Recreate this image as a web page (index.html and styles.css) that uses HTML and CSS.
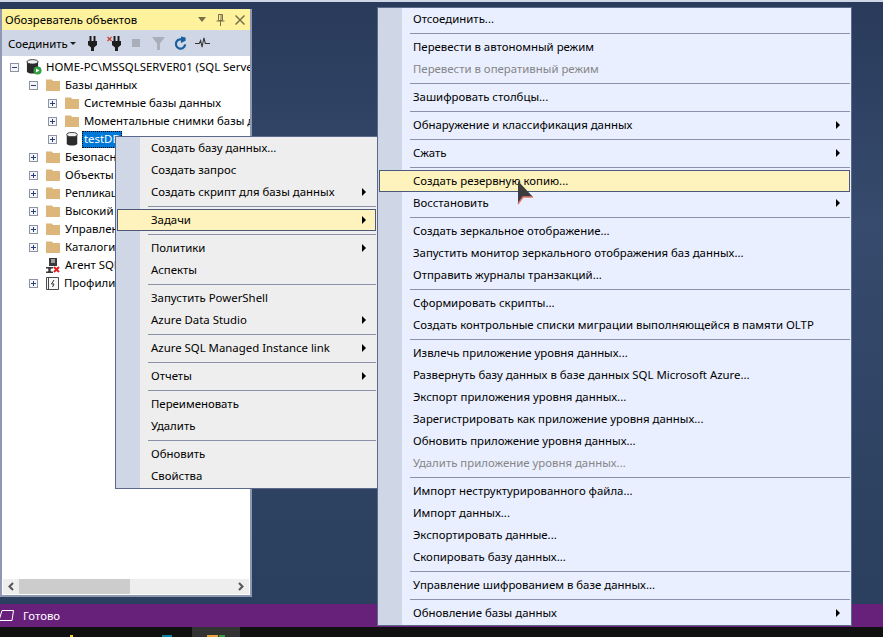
FILE: index.html
```html
<!DOCTYPE html>
<html lang="ru">
<head>
  <meta charset="UTF-8">
  <title>Обозреватель объектов</title>
  <link rel="stylesheet" href="styles.css">
</head>
<body>
  <svg class="defs" width="0" height="0">
    <symbol id="folder" viewBox="0 0 14 14">
      <path d="M0 1.500h6l1 1.500h7v10H0z" fill="#dcb67a"/>
    </symbol>
    <symbol id="db" viewBox="0 0 14 16">
      <path d="M1 3v10c0 1.600 2.700 2.500 6 2.500s6-.9 6-2.500V3z" fill="#2b2b2b"/>
      <ellipse cx="7" cy="3" rx="6" ry="2.400" fill="#f1f1f1" stroke="#2b2b2b"/>
    </symbol>
    <symbol id="plug" viewBox="0 0 9 15">
      <path d="M1.500 0h2v5h-2zM5.500 0h2v5h-2zM0 5h9v4L6 11.500V15H3v-3.500L0 9z" fill="#1e1e1e"/>
    </symbol>
  </svg>

  <div class="screen">
    <div class="top-strip"></div>
    <div class="workspace">
      <section class="panel">
        <header class="panel-title">
          <span class="panel-name">Обозреватель объектов</span>
          <span class="title-icons">
            <svg width="8" height="5" viewBox="0 0 8 5"><path d="M0 0h8L4 5z" fill="#77704a"/></svg>
            <svg width="9" height="12" viewBox="0 0 9 12"><path d="M2.500 .5h4v6h-4zM.5 7h8M4.500 7v5M5 1v5" fill="none" stroke="#77704a"/></svg>
            <svg width="10" height="10" viewBox="0 0 10 10"><path d="M.5 .5l9 9M9.500 .5l-9 9" stroke="#77704a" stroke-width="1.500"/></svg>
          </span>
        </header>
        <div class="toolbar">
          <span class="connect">Соединить</span>
          <svg class="caret" width="6" height="3" viewBox="0 0 6 3"><path d="M0 0h6L3 3z" fill="#1e1e1e"/></svg>
          <svg class="tool-plug" width="9" height="15"><use href="#plug"/></svg>
          <svg class="tool-plug-x" width="14" height="15" viewBox="0 0 14 15">
            <use href="#plug" x="5" width="9" height="15"/>
            <path d="M.5 1l4 4M4.500 1l-4 4" stroke="#c8412f" stroke-width="1.200"/>
          </svg>
          <span class="tool-stop"></span>
          <svg class="tool-filter" width="13" height="13" viewBox="0 0 14 14"><path d="M0 0h14L8.500 7v7h-3V7z" fill="#a9aeb8"/></svg>
          <svg class="tool-refresh" width="13" height="15" viewBox="0 0 14 15">
            <path d="M10.500 4.500a5 5 0 1 0 1.500 4" fill="none" stroke="#1c5f9e" stroke-width="2.400"/>
            <path d="M7.500 0v7l5-2.500V1z" fill="#1c5f9e"/>
          </svg>
          <svg class="tool-activity" width="15" height="12" viewBox="0 0 16 12"><path d="M0 6.500h4.500l1.500-3 1.500 7 2-10 1.500 6h5" fill="none" stroke="#333" stroke-width="1.100"/></svg>
        </div>

        <div class="tree">
          <div class="tree-row level-0">
            <span class="toggle minus"></span>
            <svg class="node-icon server-icon" width="16" height="16" viewBox="0 0 16 16">
              <use href="#db" width="13" height="15"/>
              <circle cx="11.500" cy="11.500" r="4" fill="#2e9e3e"/>
              <path d="M10 9.500l3.500 2-3.500 2z" fill="#fff"/>
            </svg>
            <span class="label">HOME-PC\MSSQLSERVER01 (SQL Server)</span>
          </div>
          <div class="tree-row level-1">
            <span class="toggle minus"></span>
            <svg class="node-icon" width="14" height="14"><use href="#folder"/></svg>
            <span class="label">Базы данных</span>
          </div>
          <div class="tree-row level-2">
            <span class="toggle"></span>
            <svg class="node-icon" width="14" height="14"><use href="#folder"/></svg>
            <span class="label">Системные базы данных</span>
          </div>
          <div class="tree-row level-2">
            <span class="toggle"></span>
            <svg class="node-icon" width="14" height="14"><use href="#folder"/></svg>
            <span class="label">Моментальные снимки базы данных</span>
          </div>
          <div class="tree-row level-2">
            <span class="toggle"></span>
            <svg class="node-icon" width="14" height="14"><use href="#db"/></svg>
            <span class="label selected">testDB</span>
          </div>
          <div class="tree-row level-1">
            <span class="toggle"></span>
            <svg class="node-icon" width="14" height="14"><use href="#folder"/></svg>
            <span class="label">Безопасность</span>
          </div>
          <div class="tree-row level-1">
            <span class="toggle"></span>
            <svg class="node-icon" width="14" height="14"><use href="#folder"/></svg>
            <span class="label">Объекты сервера</span>
          </div>
          <div class="tree-row level-1">
            <span class="toggle"></span>
            <svg class="node-icon" width="14" height="14"><use href="#folder"/></svg>
            <span class="label">Репликация</span>
          </div>
          <div class="tree-row level-1">
            <span class="toggle"></span>
            <svg class="node-icon" width="14" height="14"><use href="#folder"/></svg>
            <span class="label">Высокий уровень доступности</span>
          </div>
          <div class="tree-row level-1">
            <span class="toggle"></span>
            <svg class="node-icon" width="14" height="14"><use href="#folder"/></svg>
            <span class="label">Управление</span>
          </div>
          <div class="tree-row level-1">
            <span class="toggle"></span>
            <svg class="node-icon" width="14" height="14"><use href="#folder"/></svg>
            <span class="label">Каталоги Integration Services</span>
          </div>
          <div class="tree-row level-1">
            <span class="toggle blank"></span>
            <svg class="node-icon" width="14" height="15" viewBox="0 0 14 15">
              <path d="M3 0h8v8H3z" fill="#3a3a3a"/>
              <path d="M5 2h4M5 4h4" stroke="#fff"/>
              <path d="M0 9h7v1.500H5L4.500 12 5 13.500h2V15H0v-1.500h2L2.500 12 2 10.500H0z" fill="#3a3a3a"/>
              <path d="M8 9l5 5M13 9l-5 5" stroke="#e02020" stroke-width="2"/>
            </svg>
            <span class="label">Агент SQL Server</span>
          </div>
          <div class="tree-row level-1">
            <span class="toggle"></span>
            <svg class="node-icon" width="13" height="13" viewBox="0 0 13 13">
              <path d="M.5 .5h12v12H.5z" fill="#f7f7f7" stroke="#4a4a4a"/>
              <path d="M2.500 1v11" stroke="#4a4a4a"/>
              <path d="M8 3L5.500 7H8L6.500 10" fill="none" stroke="#333"/>
            </svg>
            <span class="label">Профилировщик XEvent</span>
          </div>
        </div>

        <div class="hscroll">
          <svg width="6" height="9" viewBox="0 0 6 9"><path d="M5 1L1.500 4.500 5 8" fill="none" stroke="#555" stroke-width="2"/></svg>
          <div class="hscroll-track"><div class="hscroll-thumb"></div></div>
          <svg width="6" height="9" viewBox="0 0 6 9"><path d="M1 1l3.500 3.500L1 8" fill="none" stroke="#555" stroke-width="2"/></svg>
        </div>
      </section>
    </div>

    <footer class="status">
      <svg width="14" height="11" viewBox="0 0 14 11"><path d="M2 .5h11.500L12 10.500H-1z" fill="none" stroke="#fff"/></svg>
      <span>Готово</span>
    </footer>
    <div class="taskbar">
      <span class="task-bit yellow"></span>
      <span class="task-bit teal"></span>
      <div class="task-active">
        <span class="task-bit orange"></span>
        <span class="task-bit green"></span>
      </div>
    </div>
  </div>

  <nav class="menu context-menu">
    <div class="item">Создать базу данных...</div>
    <div class="item">Создать запрос</div>
    <div class="item more">Создать скрипт для базы данных</div>
    <div class="sep"></div>
    <div class="item more active">Задачи</div>
    <div class="sep"></div>
    <div class="item more">Политики</div>
    <div class="item">Аспекты</div>
    <div class="sep"></div>
    <div class="item">Запустить PowerShell</div>
    <div class="item more">Azure Data Studio</div>
    <div class="sep"></div>
    <div class="item more">Azure SQL Managed Instance link</div>
    <div class="sep"></div>
    <div class="item more">Отчеты</div>
    <div class="sep"></div>
    <div class="item">Переименовать</div>
    <div class="item">Удалить</div>
    <div class="sep"></div>
    <div class="item">Обновить</div>
    <div class="item">Свойства</div>
  </nav>

  <nav class="menu tasks-menu">
    <div class="item">Отсоединить...</div>
    <div class="sep"></div>
    <div class="item">Перевести в автономный режим</div>
    <div class="item disabled">Перевести в оперативный режим</div>
    <div class="sep"></div>
    <div class="item">Зашифровать столбцы...</div>
    <div class="sep"></div>
    <div class="item more">Обнаружение и классификация данных</div>
    <div class="sep"></div>
    <div class="item more">Сжать</div>
    <div class="sep"></div>
    <div class="item active">Создать резервную копию...</div>
    <div class="item more">Восстановить</div>
    <div class="sep"></div>
    <div class="item">Создать зеркальное отображение...</div>
    <div class="item">Запустить монитор зеркального отображения баз данных...</div>
    <div class="item">Отправить журналы транзакций...</div>
    <div class="sep"></div>
    <div class="item">Сформировать скрипты...</div>
    <div class="item">Создать контрольные списки миграции выполняющейся в памяти OLTP</div>
    <div class="sep"></div>
    <div class="item">Извлечь приложение уровня данных...</div>
    <div class="item">Развернуть базу данных в базе данных SQL Microsoft Azure...</div>
    <div class="item">Экспорт приложения уровня данных...</div>
    <div class="item">Зарегистрировать как приложение уровня данных...</div>
    <div class="item">Обновить приложение уровня данных...</div>
    <div class="item disabled">Удалить приложение уровня данных...</div>
    <div class="sep"></div>
    <div class="item">Импорт неструктурированного файла...</div>
    <div class="item">Импорт данных...</div>
    <div class="item">Экспортировать данные...</div>
    <div class="item">Скопировать базу данных...</div>
    <div class="sep"></div>
    <div class="item">Управление шифрованием в базе данных...</div>
    <div class="sep"></div>
    <div class="item more">Обновление базы данных</div>
  </nav>

  <svg class="pointer" width="17" height="24" viewBox="0 0 17 24">
    <path d="M1 0L16 16 6 16 1 23z" fill="#3d3d3f"/>
    <path d="M16 16H6L1 23" fill="none" stroke="#e0786e" stroke-width="1.500"/>
  </svg>
</body>
</html>
```

FILE: styles.css
```css
body {
  margin: 0;
  font-family: "Noto Sans", sans-serif;
  font-size: 11.4px;
  color: #000;
  overflow: hidden;
}
.defs {
  position: absolute;
}
.screen {
  display: flex;
  flex-direction: column;
  height: 637px;
  background: linear-gradient(#293a5a, #364b6d 35%, #2b3f5e 90%);
}
.top-strip {
  height: 2px;
  background: #cfd6e5;
}
.workspace {
  flex: 1;
  padding-top: 7px;
}

/* object explorer */
.panel {
  display: flex;
  flex-direction: column;
  width: 248px;
  height: 586px;
  border: 2px solid #8f98b3;
  border-top: 0;
  background: #fff;
}
.panel-title {
  display: flex;
  align-items: center;
  justify-content: space-between;
  height: 21px;
  padding: 0 5px 0 3px;
  background: #fff29d;
}
.title-icons {
  display: flex;
  align-items: center;
  gap: 10px;
}
.toolbar {
  display: flex;
  align-items: center;
  height: 26px;
  padding-left: 6px;
  background: #cfd6e5;
}
.connect {
  width: 58px;
}
.caret {
  margin-left: 4px;
}
.tool-plug {
  margin-left: 12px;
}
.tool-plug-x {
  margin-left: 10px;
}
.tool-stop {
  width: 8px;
  height: 8px;
  margin-left: 11px;
  background: #a9aeb8;
}
.tool-filter {
  margin-left: 12px;
}
.tool-refresh {
  margin-left: 9px;
}
.tool-activity {
  margin-left: 8px;
}
.tree {
  flex: 1;
  padding-top: 2px;
  overflow: hidden;
}
.tree-row {
  display: flex;
  align-items: center;
  height: 18px;
  white-space: nowrap;
}
.label {
  padding-bottom: 2px;
}
.level-0 {
  padding-left: 8px;
}
.level-1 {
  padding-left: 27px;
}
.level-2 {
  padding-left: 46px;
}
.toggle {
  position: relative;
  flex: none;
  box-sizing: border-box;
  width: 9px;
  height: 9px;
  border: 1px solid #8d93a5;
  background: #f4f5f9;
}
.toggle::before,
.toggle::after {
  content: "";
  position: absolute;
  background: #2a3f78;
}
.toggle::before {
  left: 1px;
  top: 3px;
  width: 5px;
  height: 1px;
}
.toggle::after {
  left: 3px;
  top: 1px;
  width: 1px;
  height: 5px;
}
.minus::after {
  display: none;
}
.blank {
  visibility: hidden;
}
.node-icon {
  flex: none;
  margin: 0 5px 0 8px;
}
.server-icon {
  margin: 0 4px 0 7px;
}
.selected {
  margin-left: -2px;
  padding: 0 2px 2px;
  outline: 1px dotted #000;
  outline-offset: -1px;
  background: #0078d7;
  color: #fff;
}
.hscroll {
  display: flex;
  align-items: center;
  gap: 5px;
  height: 15px;
  margin: 0 1px 1px;
  padding: 0 5px;
  background: #eee;
}
.hscroll-track {
  flex: 1;
  height: 15px;
}
.hscroll-thumb {
  width: 111px;
  height: 15px;
  background: #ccc;
}

/* bottom bars */
.status {
  display: flex;
  align-items: center;
  gap: 9px;
  height: 23px;
  background: #68217a;
  color: #fff;
}
.taskbar {
  position: relative;
  display: flex;
  height: 10px;
  background: #101010;
  overflow: hidden;
}
.task-active {
  display: flex;
  gap: 1px;
  width: 33px;
  height: 10px;
  margin-left: 192px;
  padding: 8px 0 0 15px;
  background: #333;
}
.task-bit {
  width: 10px;
  height: 2px;
  background: #e8a33c;
}
.task-active .task-bit {
  width: 11px;
}
.yellow,
.teal {
  position: absolute;
  top: 8px;
  width: 3px;
  height: 2px;
}
.yellow {
  left: 70px;
  background: #f3d21d;
}
.teal {
  left: 162px;
  width: 10px;
  background: #0f7f9f;
}
.task-active .green {
  width: 6px;
  background: #3a9a3f;
}

/* context menus */
.menu {
  position: absolute;
  box-sizing: border-box;
  border: 1px solid #5b6a8c;
}
.context-menu {
  left: 115px;
  top: 136px;
  width: 263px;
  height: 353px;
  background: linear-gradient(90deg, #cfd6e5 24px, #eee 24px);
}
.tasks-menu {
  left: 377px;
  top: 7px;
  width: 475px;
  height: 619px;
  background: linear-gradient(90deg, #cfd6e5 24px, #e9efff 24px);
}
.item {
  position: relative;
  box-sizing: border-box;
  height: 22px;
  margin: 0 1px;
  padding-left: 34px;
  line-height: 22px;
  white-space: nowrap;
}
.more::after {
  content: "";
  position: absolute;
  right: 10px;
  top: 7px;
  border-left: 4px solid #000;
  border-top: 4px solid transparent;
  border-bottom: 4px solid transparent;
}
.active {
  border: 1px solid #4b5a7a;
  padding-left: 33px;
  line-height: 20px;
  background: #fff3bd;
}
.active::after {
  right: 9px;
  top: 6px;
}
.disabled {
  color: #868686;
}
.sep {
  height: 1px;
  margin: 3px 1px 2px 32px;
  background: #8a91a8;
}
.pointer {
  position: absolute;
  left: 517px;
  top: 181px;
}
```
